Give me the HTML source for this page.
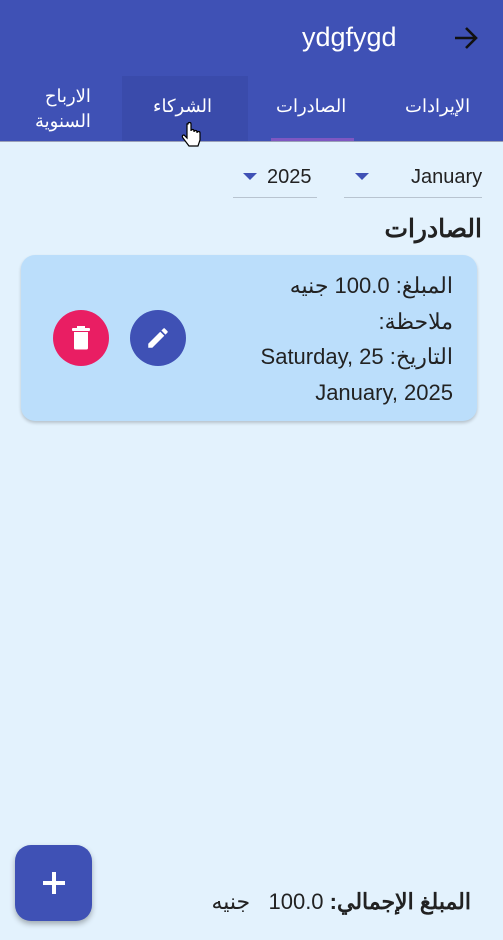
<!DOCTYPE html>
<html><head><meta charset="utf-8"><style>
body{margin:0;width:503px;height:940px;background:#e3f2fd;position:relative;overflow:hidden;font-family:"Liberation Sans","Noto Sans CJK SC",sans-serif;color:#222}
.a{position:absolute;white-space:nowrap}
.hdr{position:absolute;left:0;top:0;width:503px;height:141px;background:#3f51b5;border-bottom:1px solid #9aa0b8}
.tab{color:#fff;font-size:18px;text-align:center}
</style></head><body>
<div class="hdr"></div>
<div class="a" style="left:122px;top:76px;width:126px;height:65px;background:#3a4bab"></div>
<div class="a" style="left:302px;top:22px;color:#fff;font-size:27px">ydgfygd</div>
<svg class="a" style="left:452px;top:25px" width="28" height="26" viewBox="0 0 28 26"><path d="M3 13H24M14 3L24 13L14 23" stroke="#111" stroke-width="2.6" fill="none"/></svg>
<div class="a tab" style="left:405px;top:96px">الإيرادات</div>
<div class="a tab" style="left:276px;top:96px">الصادرات</div>
<div class="a" style="left:271px;top:138px;width:83px;height:3px;background:#7e57c2"></div>
<div class="a tab" style="left:153px;top:96px">الشركاء</div>
<div class="a tab" style="left:35px;top:84px;line-height:25px;text-align:right;direction:rtl">الارباح<br>السنوية</div>
<svg class="a" style="left:181px;top:121px" width="22" height="28" viewBox="0 0 22 28"><path d="M6 3v14l-3-3c-2 0-2 2-1 3l6 8h9l2-6v-7c0-2-3-2-3 0v-1c0-2-3-2-3 0v-1c0-2-3-2-3 0V3c0-2-3-2-3 0z" fill="#fff" stroke="#000" stroke-width="1.2"/></svg>
<div class="a" style="left:411px;top:166px;font-size:20px">January</div>
<svg class="a" style="left:355px;top:173px" width="14" height="8"><path d="M0 0H14L7 7z" fill="#3f51b5"/></svg>
<div class="a" style="left:344px;top:197px;width:138px;height:1px;background:#b8c4d0"></div>
<div class="a" style="left:267px;top:166px;font-size:20px">2025</div>
<svg class="a" style="left:243px;top:173px" width="14" height="8"><path d="M0 0H14L7 7z" fill="#3f51b5"/></svg>
<div class="a" style="left:233px;top:197px;width:84px;height:1px;background:#b8c4d0"></div>
<div class="a" style="right:21px;top:214px;font-size:25px;font-weight:bold;direction:rtl">الصادرات</div>
<div class="a" style="left:21px;top:255px;width:456px;height:166px;background:#bbdefb;border-radius:14px;box-shadow:0 2px 3px rgba(0,0,0,.2)"></div>
<div class="a" style="right:50px;top:268px;font-size:22px;line-height:35.5px;direction:rtl;text-align:right;color:#222">المبلغ: 100.0 جنيه<br>ملاحظة:<br>التاريخ: Saturday, 25<br>January, 2025</div>
<div class="a" style="left:53px;top:310px;width:56px;height:56px;border-radius:50%;background:#e91e63"></div>
<svg class="a" style="left:71px;top:326px" width="20" height="24" viewBox="0 0 20 24"><rect x="1" y="2" width="18" height="3" rx="1" fill="#fff"/><rect x="6" y="0" width="8" height="3" fill="#fff"/><path d="M3 6H17V22a1.5 1.5 0 01-1.5 1.5H4.5A1.5 1.5 0 013 22z" fill="#fff"/></svg>
<div class="a" style="left:130px;top:310px;width:56px;height:56px;border-radius:50%;background:#3f51b5"></div>
<svg class="a" style="left:145px;top:325px" width="26" height="26" viewBox="0 0 24 24"><path d="M3 17.25V21h3.75L17.81 9.94l-3.75-3.75L3 17.25zM20.71 7.04a1 1 0 000-1.41l-2.34-2.34a1 1 0 00-1.41 0l-1.83 1.83 3.75 3.75 1.83-1.83z" fill="#fff"/></svg>
<div class="a" style="left:15px;top:845px;width:77px;height:76px;border-radius:16px;background:#3f51b5;box-shadow:0 3px 6px rgba(0,0,0,.3)"></div>
<div class="a" style="left:43px;top:881px;width:22px;height:4px;background:#fff"></div>
<div class="a" style="left:52px;top:872px;width:4px;height:22px;background:#fff"></div>
<div class="a" style="right:32px;top:889px;font-size:22px;direction:rtl"><b>المبلغ الإجمالي:</b> 100.0&nbsp;&nbsp; جنيه</div>
</body></html>
